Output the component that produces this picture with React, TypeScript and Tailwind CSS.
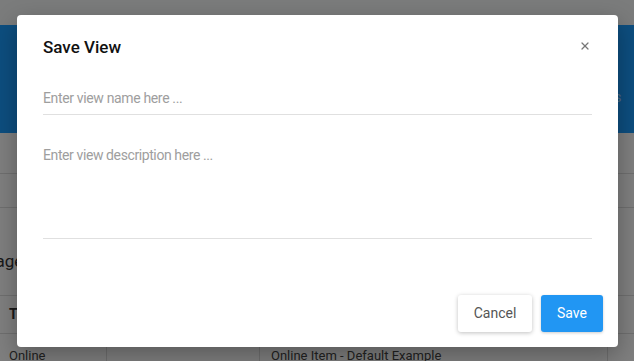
import { X } from "lucide-react";

function BackgroundPage() {
  return (
    <div className="min-h-[361px] bg-white text-[#333] [font-family:Roboto,'Liberation_Sans',sans-serif]">
      {/* top bar */}
      <div className="h-[25px] bg-[#f6f8f9]" />
      {/* blue header */}
      <div className="h-[108px] bg-[#1a9cff] flex items-start justify-end pr-[12px] pt-[62px]">
        <span className="text-[15px] leading-[20px] text-white/60 tracking-wide">Settings</span>
      </div>
      {/* toolbar rows */}
      <div className="h-[41px] border-b border-[#dedede]" />
      <div className="h-[34px] border-b border-[#dedede]" />
      <div className="h-[87px] flex items-center">
        <span className="text-[17px] text-[#333] -ml-[38px] mt-[20px]">Manage</span>
      </div>
      {/* table */}
      <div className="border-t border-[#dedede]">
        <div className="h-[38px] flex items-center border-b border-[#dedede]">
          <div className="w-[107px] pl-[9px] text-[14px] font-bold">Type</div>
          <div className="w-[153px]" />
          <div className="flex-1" />
        </div>
        <div className="h-[30px] flex text-[13px] text-[#444]">
          <div className="w-[107px] pl-[9px] pt-[12px] border-r border-[#dedede]">Online</div>
          <div className="w-[153px] border-r border-[#dedede]" />
          <div className="w-[348px] pl-[11px] pt-[12px] border-r border-[#dedede]">Online Item - Default Example</div>
        </div>
      </div>
    </div>
  );
}

export default function App() {
  return (
    <div className="relative w-[634px] h-[361px] overflow-hidden">
      <BackgroundPage />
      <div className="absolute inset-0 bg-black/50" />

      <div className="absolute left-[17px] top-[15px] w-[601px] h-[332px] bg-white rounded-[4px] shadow-[0_8px_24px_rgba(0,0,0,0.3)] pl-[26px] pr-[26px] pt-[20px] [font-family:Roboto,'Liberation_Sans',sans-serif]">
        <div className="flex items-center justify-between h-[24px]">
          <h2 className="text-[17px] font-medium text-[#111] leading-[24px]">Save View</h2>
          <button className="text-[#777] mr-[1px] mt-[-2px]">
            <X size={12} strokeWidth={2.5} />
          </button>
        </div>

        <div className="mt-[23px] h-[33px] border-b border-[#e0e0e0] flex items-center">
          <input
            className="w-full text-[14px] leading-[20px] tracking-[-0.35px] outline-none placeholder:text-[#9e9e9e] text-[#333]"
            placeholder="Enter view name here ..."
          />
        </div>

        <textarea
          className="mt-[24px] block w-full h-[100px] resize-none pt-[6px] border-b border-[#e0e0e0] text-[14px] leading-[20px] tracking-[-0.4px] outline-none placeholder:text-[#9e9e9e] text-[#333]"
          placeholder="Enter view description here ..."
        />

        <div className="mt-[56px] flex justify-end gap-[9px] mr-[-11px]">
          <button className="h-[37px] w-[74px] rounded-[3px] bg-white text-[#555] text-[14px] shadow-[0_1px_4px_rgba(0,0,0,0.25)]">
            Cancel
          </button>
          <button className="h-[37px] w-[62px] rounded-[3px] bg-[#2196f3] text-white text-[14px] shadow-[0_1px_3px_rgba(0,0,0,0.2)]">
            Save
          </button>
        </div>
      </div>
    </div>
  );
}
